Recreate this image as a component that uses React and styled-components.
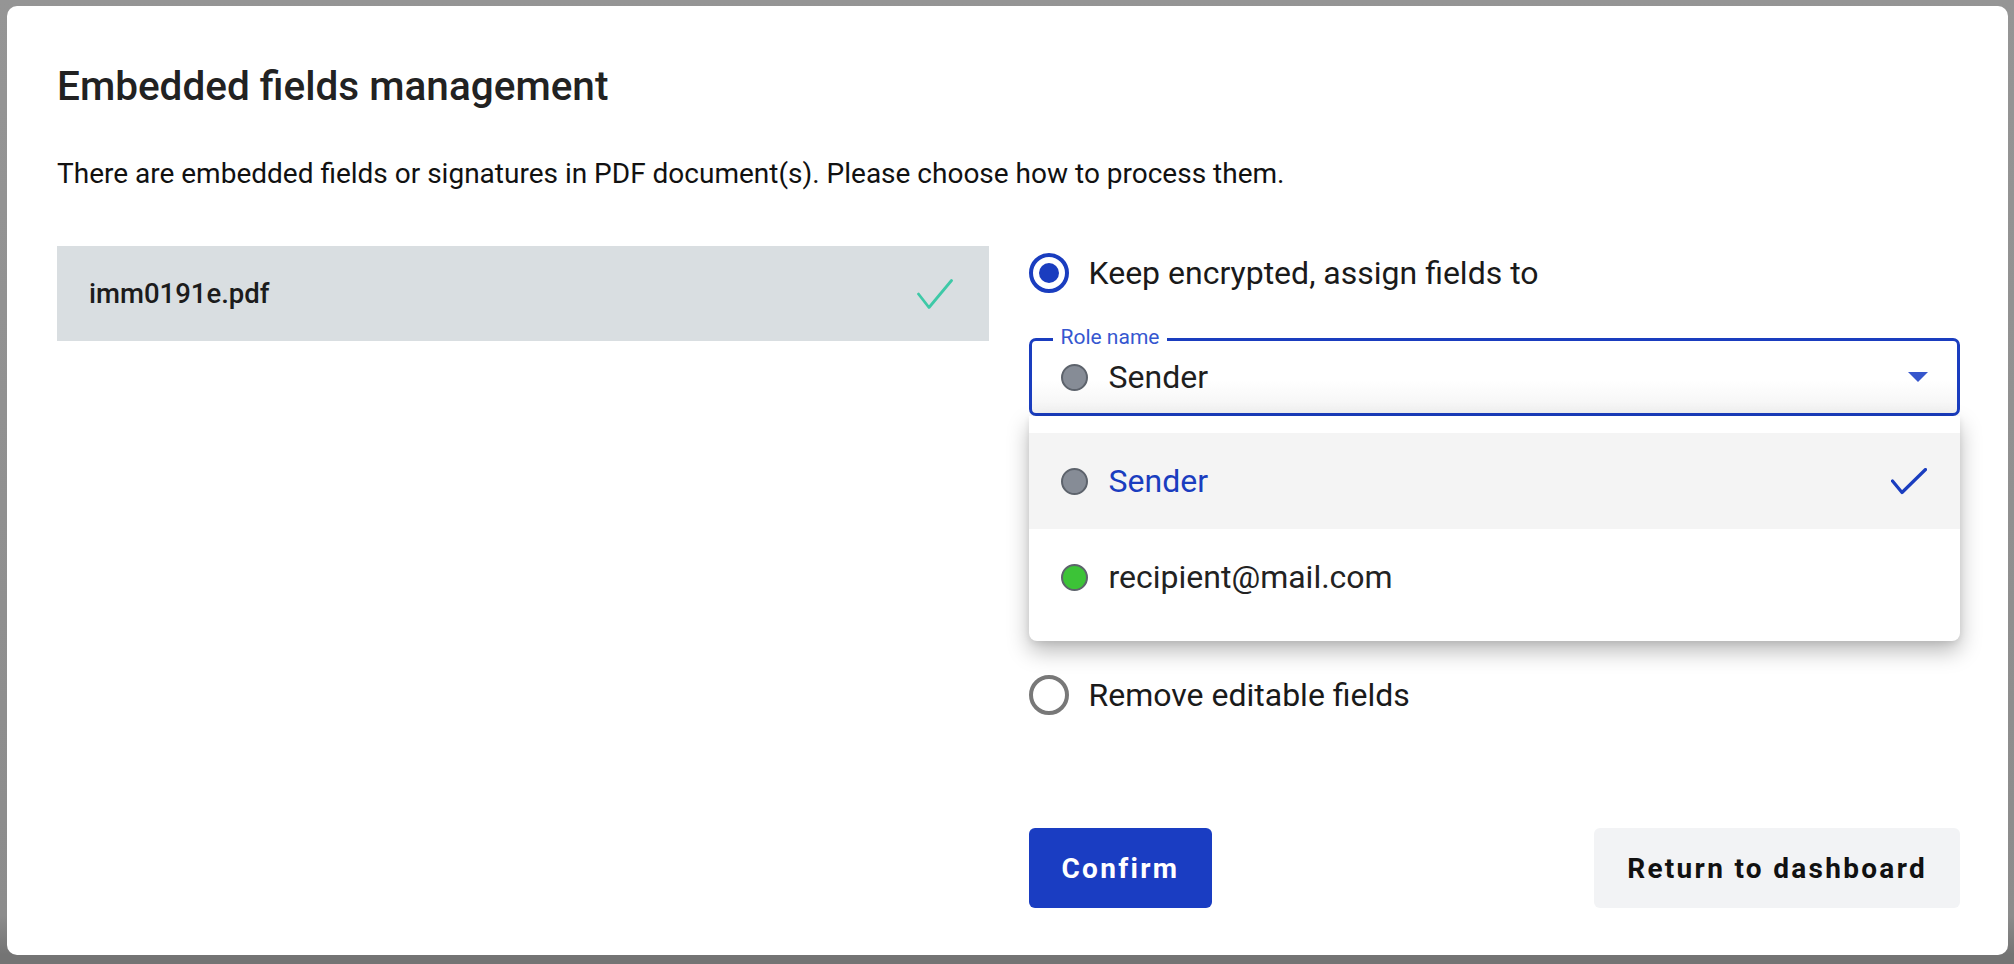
import React from 'react';
import styled, { createGlobalStyle } from 'styled-components';

const GlobalStyle = createGlobalStyle`
  html, body {
    margin: 0;
    padding: 0;
  }
  body {
    font-family: Roboto, "Liberation Sans", Arial, sans-serif;
    background: #8f8f8f;
  }
  * {
    box-sizing: border-box;
  }
`;

const roles = [
  { id: 'sender', name: 'Sender', color: '#868c96', selected: true },
  { id: 'recipient', name: 'recipient@mail.com', color: '#3cc337', selected: false },
];

const Backdrop = styled.div`
  display: flex;
  min-height: 100vh;
  padding: 6px 6px 9px 7px;
  background: linear-gradient(180deg, #959595 0%, #8c8c8c 95%, #747474 99%);
`;

const Modal = styled.div`
  flex: 1;
  display: flex;
  flex-direction: column;
  background: #fff;
  border-radius: 10px;
  padding: 0 48px 47px 50px;
`;

const Title = styled.h2`
  margin: 58px 0 0;
  font-size: 40.5px;
  line-height: 44px;
  font-weight: 500;
  color: #222;
`;

const Intro = styled.p`
  margin: 50px 0 0;
  font-size: 28px;
  line-height: 32px;
  color: #111;
`;

const Columns = styled.div`
  flex: 1;
  display: grid;
  grid-template-columns: 1fr 1fr;
  column-gap: 40px;
  margin-top: 56px;
`;

const FileList = styled.div`
  display: flex;
  flex-direction: column;
`;

const FileRow = styled.div`
  display: flex;
  align-items: center;
  justify-content: space-between;
  height: 95px;
  padding: 0 36px 0 32px;
  background: #d9dee1;
  font-size: 27.5px;
  font-weight: 500;
  color: #1c1c1c;
`;

const Options = styled.div`
  display: flex;
  flex-direction: column;
`;

const RadioRow = styled.label`
  display: flex;
  align-items: center;
  gap: 20px;
  min-height: 54px;
  margin-top: ${(p) => p.$offset || 0}px;
  font-size: 32px;
  color: #1a1a1a;
  cursor: pointer;
`;

const RadioCircle = styled.span`
  display: flex;
  align-items: center;
  justify-content: center;
  width: 40px;
  height: 40px;
  border-radius: 50%;
  border: 4px solid ${(p) => (p.$checked ? '#1a3dbf' : '#787878')};

  &::after {
    content: '';
    display: ${(p) => (p.$checked ? 'block' : 'none')};
    width: 20px;
    height: 20px;
    border-radius: 50%;
    background: #1a3dbf;
  }
`;

const SelectWrap = styled.div`
  position: relative;
  margin-top: 38px;
`;

const SelectBox = styled.div`
  display: flex;
  align-items: center;
  height: 78px;
  padding: 0 29px;
  border: 3.5px solid #1a3dbf;
  border-radius: 7px;
  background: linear-gradient(180deg, #fff 55%, #f3f3f3 100%);
  font-size: 32px;
  color: #1f1f1f;
`;

const Legend = styled.span`
  position: absolute;
  top: -12px;
  left: 24px;
  padding: 0 8px;
  background: #fff;
  font-size: 21px;
  line-height: 22px;
  color: #3557d0;
`;

const Dot = styled.span`
  flex: none;
  width: 27px;
  height: 27px;
  border-radius: 50%;
  border: 2px solid #5d636c;
  background: ${(p) => p.$color};
  margin-right: 21px;
`;

const SelectValue = styled.span`
  flex: 1;
`;

const Menu = styled.ul`
  position: absolute;
  top: 100%;
  left: 0;
  right: 0;
  z-index: 2;
  margin: 0;
  padding: 17px 0 16px;
  list-style: none;
  background: #fff;
  border-radius: 0 0 8px 8px;
  box-shadow: 0 10px 22px rgba(0, 0, 0, 0.28), 0 2px 6px rgba(0, 0, 0, 0.08);
`;

const MenuItem = styled.li`
  display: flex;
  align-items: center;
  height: 96px;
  padding: 0 33px 0 32px;
  font-size: 32px;
  background: ${(p) => (p.$selected ? '#f4f4f4' : '#fff')};
  color: ${(p) => (p.$selected ? '#1a3dbf' : '#222')};
`;

const ItemLabel = styled.span`
  flex: 1;
`;

const Actions = styled.div`
  display: flex;
  justify-content: space-between;
  margin-top: auto;
`;

const Button = styled.button`
  height: 80px;
  padding: 0 ${(p) => (p.$primary ? 33 : 33)}px;
  border: none;
  border-radius: 6px;
  font-family: Roboto, "Liberation Sans", Arial, sans-serif;
  font-size: 28px;
  font-weight: 700;
  letter-spacing: 2.3px;
  background: ${(p) => (p.$primary ? '#1a3dc2' : '#f2f3f5')};
  color: ${(p) => (p.$primary ? '#fff' : '#111')};
  cursor: pointer;
`;

const Check = ({ color, width, height, points, stroke }) => (
  <svg width={width} height={height} viewBox={`0 0 ${width} ${height}`} fill="none">
    <polyline points={points} stroke={color} strokeWidth={stroke} strokeLinecap="round" strokeLinejoin="round" />
  </svg>
);

const Caret = () => (
  <svg width="20" height="10" viewBox="0 0 20 10">
    <polygon points="0,0 20,0 10,10" fill="#3656cc" />
  </svg>
);

export default function App() {
  const current = roles.find((r) => r.selected);
  return (
    <>
      <GlobalStyle />
      <Backdrop>
        <Modal>
          <Title>Embedded fields management</Title>
          <Intro>
            There are embedded fields or signatures in PDF document(s). Please choose how to process them.
          </Intro>
          <Columns>
            <FileList>
              <FileRow>
                imm0191e.pdf
                <Check color="#3ec9a7" width={36} height={30} points="1.5,15 12,28.5 34.5,1.5" stroke={2.8} />
              </FileRow>
            </FileList>
            <Options>
              <RadioRow>
                <RadioCircle $checked />
                Keep encrypted, assign fields to
              </RadioRow>
              <SelectWrap>
                <Legend>Role name</Legend>
                <SelectBox>
                  <Dot $color={current.color} />
                  <SelectValue>{current.name}</SelectValue>
                  <Caret />
                </SelectBox>
                <Menu>
                  {roles.map((r) => (
                    <MenuItem key={r.id} $selected={r.selected}>
                      <Dot $color={r.color} />
                      <ItemLabel>{r.name}</ItemLabel>
                      {r.selected && (
                        <Check color="#1a3dbf" width={36} height={27} points="1.5,13 11,24.5 34.5,1.5" stroke={3.2} />
                      )}
                    </MenuItem>
                  ))}
                </Menu>
              </SelectWrap>
              <RadioRow $offset={252}>
                <RadioCircle />
                Remove editable fields
              </RadioRow>
              <Actions>
                <Button $primary>Confirm</Button>
                <Button>Return to dashboard</Button>
              </Actions>
            </Options>
          </Columns>
        </Modal>
      </Backdrop>
    </>
  );
}
